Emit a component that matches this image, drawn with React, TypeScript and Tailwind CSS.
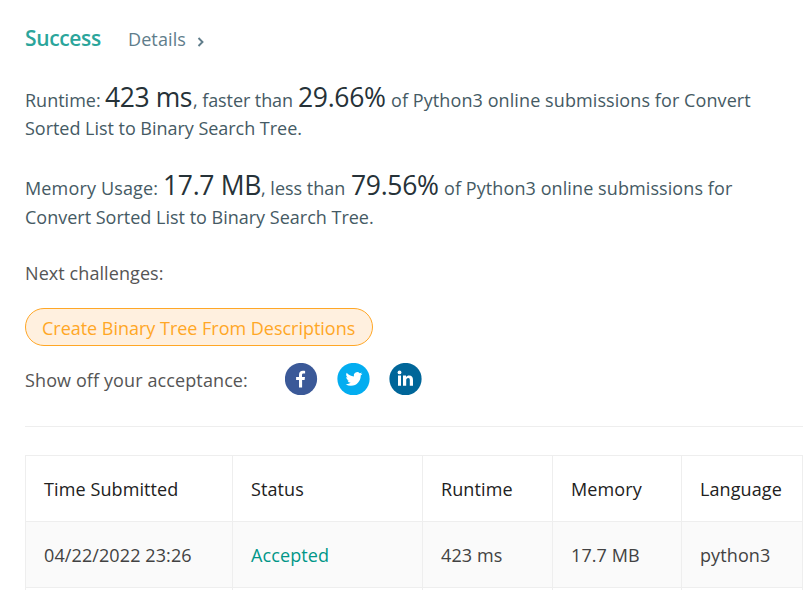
import React from "react";

const columns = [
  { title: "Time Submitted", value: "04/22/2022 23:26", width: "w-[207px]" },
  { title: "Status", value: "Accepted", width: "w-[190px]" },
  { title: "Runtime", value: "423 ms", width: "w-[130px]" },
  { title: "Memory", value: "17.7 MB", width: "w-[129px]" },
  { title: "Language", value: "python3", width: "w-[121px]" },
];

function Circle({ color, cx, children }: { color: string; cx: number; children: React.ReactNode }) {
  return (
    <svg className="size-[33px]" viewBox="0 0 33 33">
      <circle cx={cx} cy="16" r="16.1" fill={color} />
      {children}
    </svg>
  );
}

export default function App() {
  return (
    <div className="h-[590px] w-[812px] overflow-hidden bg-white pl-[25px] font-['Open_Sans','Noto_Sans',sans-serif] text-[18px] leading-7 font-normal whitespace-nowrap text-[#455a64]">
      <div className="flex h-[83px] pt-[25px]">
        <h1 className="-mt-px w-[103px] text-[21px] font-semibold tracking-[-0.35px] text-[#2ba59b]">Success</h1>
        <a className="flex text-[#607d8b]">
          <span className="w-[68px] tracking-[0.1px]">Details</span>
          <svg className="mt-[12px] h-[10px] w-[8px]" viewBox="0 0 8 10" fill="none" stroke="#607d8b" strokeWidth="1.9">
            <path d="M2.5 1 6.5 5 2.5 9" />
          </svg>
        </a>
      </div>

      <p className="h-[88px]">
        <span className="flex h-[31px] items-baseline">
          <span className="w-[80px]">Runtime:</span>
          <span className="w-[88px] text-[26.5px] tracking-[-0.4px] text-[#263238]">423 ms</span>
          <span className="w-[105px] tracking-[-0.08px]">, faster than</span>
          <span className="w-[93px] text-[26.5px] tracking-[-0.3px] text-[#263238]">29.66%</span>
          <span className="tracking-[0.09px]">of Python3 online submissions for Convert</span>
        </span>
        <span className="block tracking-[-0.03px]">Sorted List to Binary Search Tree.</span>
      </p>

      <p className="h-[88px]">
        <span className="flex h-[32px] items-baseline">
          <span className="w-[138px] tracking-[0.15px]">Memory Usage:</span>
          <span className="w-[98px] text-[26.5px] tracking-[-0.3px] text-[#263238]">17.7 MB</span>
          <span className="w-[90px]">, less than</span>
          <span className="w-[93px] text-[26.5px] tracking-[-0.3px] text-[#263238]">79.56%</span>
          <span className="tracking-[0.09px]">of Python3 online submissions for</span>
        </span>
        <span className="block">Convert Sorted List to Binary Search Tree.</span>
      </p>

      <p className="h-[49px] tracking-[0.08px] text-[#555]">Next challenges:</p>

      <a className="flex h-[38px] w-[348px] items-center rounded-full border border-[#ffa726] bg-[#fff0df] pt-[2px] pl-4 text-[#ffa726]">
        <span className="tracking-[-0.02px]">Create Binary Tree From Descriptions</span>
      </a>

      <div className="flex h-[80px] pt-[17px]">
        <span className="w-[260px] pt-[3px] tracking-[0.11px] text-[#555]">Show off your acceptance:</span>
        <div className="flex gap-[19px]">
          <Circle color="#3b5998" cx={16}>
            <path fill="#fff" d="M14 24.5v-7.4h-2.9v-3.2H14v-2c0-2.8 1.5-4.2 4-4.2.9 0 1.7.1 2.1.2v2.7h-1.4c-1.4 0-1.7.7-1.7 1.7v1.6h3l-.4 3.2h-2.5v7.4z" />
          </Circle>
          <Circle color="#03adf0" cx={16.5}>
            <path fill="#fff" transform="translate(8.6 7.6) scale(.7)" d="M23.95 4.57a10 10 0 0 1-2.82.77 4.96 4.96 0 0 0 2.16-2.72c-.95.55-2 .95-3.13 1.18a4.92 4.92 0 0 0-8.38 4.48C7.69 8.1 4.07 6.13 1.64 3.16a4.92 4.92 0 0 0 1.52 6.57 4.9 4.9 0 0 1-2.23-.61v.06c0 2.39 1.7 4.38 3.95 4.83a5 5 0 0 1-2.21.08 4.94 4.94 0 0 0 4.6 3.42A9.87 9.87 0 0 1 0 19.54a13.99 13.99 0 0 0 7.56 2.21c9.05 0 14-7.5 14-13.98 0-.21 0-.42-.02-.63a9.9 9.9 0 0 0 2.41-2.57z" />
          </Circle>
          <Circle color="#006699" cx={16.5}>
            <path fill="#fff" d="M9 12.6h3v10.2H9zM14 12.6h3v1.4c.6-1 1.7-1.6 3.1-1.6 2.8 0 3.9 1.7 3.9 4.5v5.9h-3.2v-5.5c0-1.3-.4-2.2-1.6-2.2-1.3 0-2 .9-2 2.3v5.4H14z" />
            <circle cx="10.5" cy="9.4" r="1.9" fill="#fff" />
          </Circle>
        </div>
      </div>

      <hr className="mb-[28px] w-[778px] border-[#eee]" />

      <table className="w-[778px] table-fixed border-collapse text-left tracking-[0.1px] text-[#424242]">
        <thead>
          <tr className="h-[66px] text-[#212121]">
            {columns.map((c) => (
              <th key={c.title} className={`${c.width} border border-[#eee] pl-[18px] font-normal`}>{c.title}</th>
            ))}
          </tr>
        </thead>
        <tbody>
          <tr className="h-[66px] bg-[#fafafa]">
            {columns.map((c) => (
              <td key={c.title} className={`border border-[#eee] pl-[18px] ${c.title === "Status" ? "text-[#009688]" : ""}`}>{c.value}</td>
            ))}
          </tr>
          <tr className="h-[66px]">
            {columns.map((c) => (
              <td key={c.title} className="border border-[#eee]" />
            ))}
          </tr>
        </tbody>
      </table>
    </div>
  );
}
